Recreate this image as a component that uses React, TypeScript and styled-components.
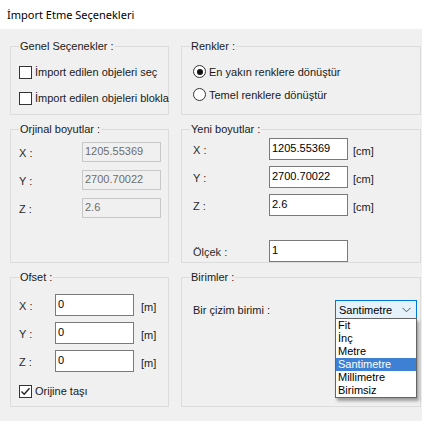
import { Fragment } from 'react';
import styled, { createGlobalStyle } from 'styled-components';

const GlobalStyle = createGlobalStyle`
  html, body {
    margin: 0;
    padding: 0;
    background: #f0f0f0;
  }
  body {
    font-family: 'Liberation Sans', Arial, sans-serif;
    font-size: 11px;
    color: #1a1a1a;
  }
`;

const Window = styled.div`
  width: 422px;
  height: 421px;
  background: #f0f0f0;
  overflow: hidden;
`;

const TitleBar = styled.div`
  height: 29px;
  background: #ffffff;
  display: flex;
  align-items: center;
  padding-left: 7px;
  font-family: 'Noto Sans', sans-serif;
  font-size: 11px;
  color: #000;
`;

const Body = styled.div`
  display: grid;
  grid-template-columns: 159px 240px;
  grid-template-rows: 76px 141px 137px;
  column-gap: 12px;
  row-gap: 7px;
  padding: 10px 0 0 10px;
`;

const Group = styled.fieldset`
  margin: 0;
  padding: 0 0 0 8px;
  border: 1px solid #dcdcdc;
  min-width: 0;
  box-sizing: border-box;
  height: 100%;
  position: relative;
`;

const Legend = styled.legend`
  padding: 0 1px;
  margin-left: 0;
  line-height: 14px;
  color: #1a1a1a;
`;

const Stack = styled.div<{ $top: number; $left?: number; $row: number }>`
  display: flex;
  flex-direction: column;
  padding-top: ${(p) => p.$top}px;
  padding-left: ${(p) => p.$left ?? 0}px;

  & > * {
    height: ${(p) => p.$row}px;
  }
`;

const OptionRow = styled.label`
  display: flex;
  align-items: center;
  gap: 3px;
  white-space: nowrap;
`;

const Box = styled.span`
  width: 11px;
  height: 11px;
  border: 1px solid #333;
  background: #fff;
  display: flex;
  align-items: center;
  justify-content: center;
  flex: none;
`;

const Radio = styled.span<{ $on?: boolean }>`
  width: 11px;
  height: 11px;
  border: 1px solid #333;
  border-radius: 50%;
  background: #fff;
  display: flex;
  align-items: center;
  justify-content: center;
  flex: none;

  &::after {
    content: '';
    display: ${(p) => (p.$on ? 'block' : 'none')};
    width: 6px;
    height: 6px;
    border-radius: 50%;
    background: #111;
  }
`;

const FieldGrid = styled.div<{ $top: number; $left: number; $label: number; $gap: number }>`
  display: grid;
  grid-template-columns: ${(p) => p.$label}px 79px auto;
  row-gap: ${(p) => p.$gap}px;
  padding-top: ${(p) => p.$top}px;
  padding-left: ${(p) => p.$left}px;
  align-items: center;
`;

const FieldLabel = styled.span`
  color: #2a2a2a;
  padding-top: 2px;
`;

const Input = styled.div<{ $disabled?: boolean; $h: number }>`
  box-sizing: border-box;
  height: ${(p) => p.$h}px;
  border: 1px solid ${(p) => (p.$disabled ? '#c8c8c8' : '#7a7a7a')};
  background: ${(p) => (p.$disabled ? '#f0f0f0' : '#ffffff')};
  color: ${(p) => (p.$disabled ? '#6d6d6d' : '#000')};
  padding: 0 2px 2px;
  display: flex;
  align-items: center;
`;

const Unit = styled.span<{ $ml: number }>`
  margin-left: ${(p) => p.$ml}px;
  padding-top: 4px;
  color: #1a1a1a;
`;

const Spacer = styled.div<{ $h: number }>`
  grid-column: 1 / -1;
  height: ${(p) => p.$h}px;
`;

const UnitRow = styled.div`
  display: flex;
  align-items: center;
  justify-content: space-between;
  padding: 16px 3px 0 3px;
`;

const SelectWrap = styled.div`
  position: relative;
`;

const Select = styled.div`
  box-sizing: border-box;
  width: 82px;
  height: 19px;
  border: 1px solid #0078d7;
  background: #e5f1fb;
  display: flex;
  align-items: center;
  justify-content: space-between;
  padding: 0 5px 0 3px;
  color: #000;
`;

const List = styled.div`
  position: absolute;
  left: 0;
  top: 18px;
  width: 82px;
  box-sizing: border-box;
  border: 1px solid #646464;
  background: #fff;
  box-shadow: 2px 3px 3px rgba(0, 0, 0, 0.35);
  z-index: 2;
`;

const Item = styled.div<{ $active?: boolean }>`
  height: 13px;
  line-height: 13px;
  padding-left: 2px;
  background: ${(p) => (p.$active ? '#3d80d4' : 'transparent')};
  color: ${(p) => (p.$active ? '#fff' : '#000')};
`;

const Check = () => (
  <svg width="11" height="11" viewBox="0 0 11 11">
    <polyline points="1.5,5.5 4.2,8.2 9.5,2.3" fill="none" stroke="#222" strokeWidth="1.4" />
  </svg>
);

const Chevron = () => (
  <svg width="9" height="6" viewBox="0 0 9 6">
    <polyline points="0.5,0.8 4.5,4.8 8.5,0.8" fill="none" stroke="#555" strokeWidth="1" />
  </svg>
);

const original = ['1205.55369', '2700.70022', '2.6'];
const axes = ['X :', 'Y :', 'Z :'];
const units = ['Fit', 'İnç', 'Metre', 'Santimetre', 'Millimetre', 'Birimsiz'];

export default function App() {
  return (
    <Window>
      <GlobalStyle />
      <TitleBar>İmport Etme Seçenekleri</TitleBar>
      <Body>
        <Group>
          <Legend>Genel Seçenekler :</Legend>
          <Stack $top={6} $row={26}>
            <OptionRow>
              <Box />
              İmport edilen objeleri seç
            </OptionRow>
            <OptionRow>
              <Box />
              İmport edilen objeleri blokla
            </OptionRow>
          </Stack>
        </Group>

        <Group>
          <Legend>Renkler :</Legend>
          <Stack $top={7} $left={3} $row={23}>
            <OptionRow>
              <Radio $on />
              En yakın renklere dönüştür
            </OptionRow>
            <OptionRow>
              <Radio />
              Temel renklere dönüştür
            </OptionRow>
          </Stack>
        </Group>

        <Group>
          <Legend>Orjinal boyutlar :</Legend>
          <FieldGrid $top={6} $left={0} $label={63} $gap={8}>
            {axes.map((a, i) => (
              <Fragment key={`o-${a}`}>
                <FieldLabel>{a}</FieldLabel>
                <Input $disabled $h={20}>
                  {original[i]}
                </Input>
                <span />
              </Fragment>
            ))}
          </FieldGrid>
        </Group>

        <Group>
          <Legend>Yeni boyutlar :</Legend>
          <FieldGrid $top={2} $left={3} $label={76} $gap={6}>
            {axes.map((a, i) => (
              <Fragment key={`n-${a}`}>
                <FieldLabel>{a}</FieldLabel>
                <Input $h={22}>{original[i]}</Input>
                <Unit $ml={5}>[cm]</Unit>
              </Fragment>
            ))}
            <Spacer $h={12} />
            <FieldLabel>Ölçek :</FieldLabel>
            <Input $h={22}>1</Input>
            <span />
          </FieldGrid>
        </Group>

        <Group>
          <Legend>Ofset :</Legend>
          <FieldGrid $top={10} $left={0} $label={36} $gap={6}>
            {axes.map((a) => (
              <Fragment key={`f-${a}`}>
                <FieldLabel>{a}</FieldLabel>
                <Input $h={22}>0</Input>
                <Unit $ml={7}>[m]</Unit>
              </Fragment>
            ))}
          </FieldGrid>
          <Stack $top={12} $row={14}>
            <OptionRow>
              <Box>
                <Check />
              </Box>
              Orijine taşı
            </OptionRow>
          </Stack>
        </Group>

        <Group>
          <Legend>Birimler :</Legend>
          <UnitRow>
            <span>Bir çizim birimi :</span>
            <SelectWrap>
              <Select>
                <span>Santimetre</span>
                <Chevron />
              </Select>
              <List>
                {units.map((u) => (
                  <Item key={u} $active={u === 'Santimetre'}>
                    {u}
                  </Item>
                ))}
              </List>
            </SelectWrap>
          </UnitRow>
        </Group>
      </Body>
    </Window>
  );
}
